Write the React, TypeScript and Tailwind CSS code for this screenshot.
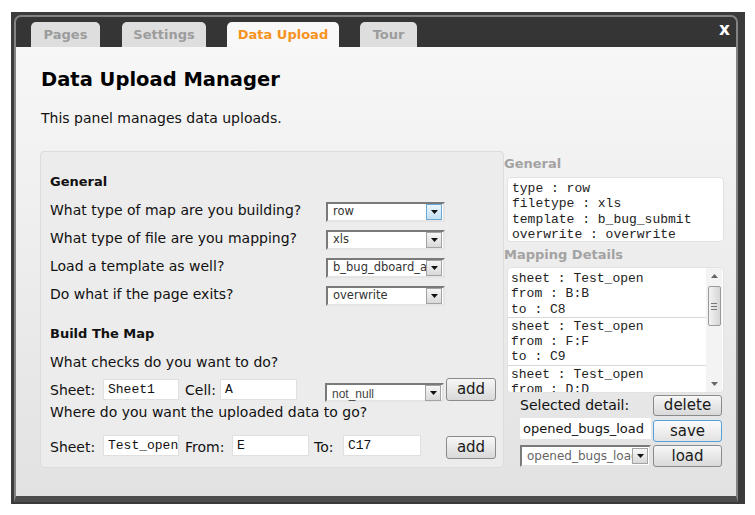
import React from 'react';

const sans = "font-['DejaVu_Sans',sans-serif]";
const mono = "font-['Liberation_Mono','Courier_New',monospace]";

const Arrow = ({ active }: { active?: boolean }) => (
  <span
    className={`flex h-[16px] w-[16px] shrink-0 items-center justify-center border ${
      active ? 'border-[#6aa7d4] bg-gradient-to-b from-[#eaf5fc] to-[#c2e0f4]' : 'border-[#a3a3a3] bg-gradient-to-b from-[#f6f6f6] to-[#d9d9d9]'
    }`}
  >
    <svg width="7" height="4" viewBox="0 0 7 4">
      <path d="M0 0h7L3.5 4z" fill="#111" />
    </svg>
  </span>
);

const Select = ({ value, className, active, textClass }: { value: string; className: string; active?: boolean; textClass?: string }) => (
  <div
    className={`flex items-center border-2 border-t-[#7a7a7a] border-l-[#7a7a7a] border-r-[#e4e4e4] border-b-[#e4e4e4] bg-white pr-px ${className}`}
  >
    <span className={`flex-1 overflow-hidden whitespace-nowrap pl-[5px] ${textClass ?? "text-[11.5px] text-[#333] " + sans}`}>{value}</span>
    <Arrow active={active} />
  </div>
);

const Field = ({ value, className }: { value: string; className: string }) => (
  <div className={`h-[21px] overflow-hidden whitespace-nowrap border border-[#e0e0e0] bg-white pl-[4px] text-[13px] leading-[19px] text-[#111] ${mono} ${className}`}>
    {value}
  </div>
);

const Btn = ({ label, className }: { label: string; className: string }) => (
  <div
    className={`flex items-center justify-center rounded-[3px] border bg-gradient-to-b text-[15px] text-[#1a1a1a] ${className}`}
  >
    {label}
  </div>
);

const tabs = [
  { name: 'Pages', w: 'w-[69px]', ml: 'ml-0' },
  { name: 'Settings', w: 'w-[84px]', ml: 'ml-[22px]' },
  { name: 'Data Upload', w: 'w-[112px]', ml: 'ml-[21px]', active: true },
  { name: 'Tour', w: 'w-[57px]', ml: 'ml-[21px]' },
];

const questions = [
  { q: 'What type of map are you building?', v: 'row', active: true },
  { q: 'What type of file are you mapping?', v: 'xls' },
  { q: 'Load a template as well?', v: 'b_bug_dboard_all' },
  { q: 'Do what if the page exits?', v: 'overwrite' },
];

const mappings = [
  ['sheet : Test_open', 'from : B:B', 'to : C8'],
  ['sheet : Test_open', 'from : F:F', 'to : C9'],
  ['sheet : Test_open', 'from : D:D', 'to : C10'],
];

export default function App() {
  return (
    <div className={`h-[515px] w-[755px] overflow-hidden bg-white ${sans}`}>
      <div className="ml-[11px] mt-[12px] h-[492px] w-[734px] bg-[#3b3b3b] pl-[3px] pt-[3px]">
        <div className="flex h-[487px] w-[724px] flex-col rounded-t-[7px] border-x-2 border-t-2 border-b-[6px] border-[#838383] border-b-[#4d4d4d] bg-[#353535]">
          {/* Tabs */}
          <div className="flex h-[30px] shrink-0 items-end pl-[15px] pr-[6px]">
            {tabs.map((t) => (
              <div
                key={t.name}
                className={`flex h-[25px] items-center justify-center rounded-t-[5px] text-[13px] font-bold ${t.w} ${t.ml} ${
                  t.active ? 'bg-[#f8f8f8] text-[#f7931e]' : 'bg-[#dedede] text-[#9c9c9c]'
                }`}
              >
                {t.name}
              </div>
            ))}
            <div className="ml-auto mb-[5px] self-start pt-[5px] text-[17px] font-bold leading-[14px] text-white">x</div>
          </div>

          {/* Body */}
          <div className="h-[449px] bg-gradient-to-b from-[#f7f7f7] to-[#e2e2e2] pl-[25px] pt-[21px] text-[#111]">
            <h1 className="h-[24px] text-[19.5px] font-bold leading-[24px] text-black">Data Upload Manager</h1>
            <p className="mt-[16px] h-[20px] text-[14px] leading-[20px]">This panel manages data uploads.</p>

            <div className="mt-[23px] flex items-start">
              {/* Left panel */}
              <div className="ml-[-1px] h-[317px] w-[464px] rounded-[4px] border border-[#dcdcdc] bg-[#ececec] pl-[9px] pt-[21px] text-[14px]">
                <div className="h-[18px] text-[13px] font-bold leading-[18px]">General</div>
                <div className="mt-[5px]">
                  {questions.map((r) => (
                    <div key={r.q} className="flex h-[28px] items-start">
                      <span className="w-[276px] leading-[28px]">{r.q}</span>
                      <Select value={r.v} active={r.active} className="mt-[6px] h-[20px] w-[119px]" />
                    </div>
                  ))}
                </div>

                <div className="mt-[17px] h-[18px] text-[13px] font-bold leading-[18px]">Build The Map</div>
                <div className="mt-[9px] h-[20px] leading-[20px]">What checks do you want to do?</div>
                <div className="flex h-[30px] items-start">
                  <span className="mt-[8px] w-[53px] leading-[20px]">Sheet:</span>
                  <Field value="Sheet1" className="mt-[7px] w-[76px]" />
                  <span className="ml-[6px] mt-[8px] w-[35px] leading-[20px]">Cell:</span>
                  <Field value="A" className="mt-[7px] w-[77px]" />
                  <Select
                    value="not_null"
                    className="ml-[28px] mt-[11px] h-[19px] w-[119px]"
                    textClass={"text-[12px] leading-[14px] pt-[3px] text-[#444] font-['Liberation_Sans',sans-serif]"}
                  />
                  <Btn label="add" className="ml-[2px] mt-[6px] h-[23px] w-[50px] border-[#8a8a8a] from-[#f7f7f7] to-[#d9d9d9]" />
                </div>
                <div className="h-[20px] leading-[20px]">Where do you want the uploaded data to go?</div>
                <div className="flex items-start">
                  <span className="mt-[15px] w-[53px] leading-[20px]">Sheet:</span>
                  <Field value="Test_open" className="mt-[13px] w-[76px]" />
                  <span className="ml-[6px] mt-[15px] w-[47px] leading-[20px]">From:</span>
                  <Field value="E" className="mt-[13px] w-[77px]" />
                  <span className="ml-[5px] mt-[15px] w-[29px] leading-[20px]">To:</span>
                  <Field value="C17" className="mt-[13px] w-[78px]" />
                  <Btn label="add" className="ml-[25px] mt-[14px] h-[23px] w-[50px] border-[#8a8a8a] from-[#f7f7f7] to-[#d9d9d9]" />
                </div>
              </div>

              {/* Right column */}
              <div className="w-[221px] pt-[4px]">
                <div className="h-[18px] text-[13px] font-bold leading-[18px] text-[#a3a3a3]">General</div>
                <div className={`ml-[3px] mt-[4px] h-[65px] w-[217px] rounded-[4px] border border-[#e2e2e2] bg-white pl-[4px] pt-[3px] text-[13px] leading-[15.3px] text-[#222] ${mono}`}>
                  <div>type : row</div>
                  <div>filetype : xls</div>
                  <div>template : b_bug_submit</div>
                  <div>overwrite : overwrite</div>
                </div>
                <div className="mt-[4px] h-[18px] text-[13px] font-bold leading-[18px] text-[#a3a3a3]">Mapping Details</div>
                <div className="ml-[3px] mt-[3px] flex h-[126px] w-[217px] overflow-hidden rounded-[4px] border border-[#e2e2e2] bg-white">
                  <div className={`flex-1 overflow-hidden pt-[2px] text-[13px] leading-[15.3px] text-[#222] ${mono}`}>
                    {mappings.map((m, i) => (
                      <div key={i} className="border-b border-[#d9d9d9] pl-[3px] pt-px">
                        {m.map((l) => (
                          <div key={l}>{l}</div>
                        ))}
                      </div>
                    ))}
                  </div>
                  <div className="mr-px flex w-[16px] flex-col items-center bg-[#f3f3f3]">
                    <svg className="mt-[6px]" width="7" height="4" viewBox="0 0 7 4">
                      <path d="M3.5 0L7 4H0z" fill="#666" />
                    </svg>
                    <div className="mt-[8px] flex h-[40px] w-[13px] items-center justify-center rounded-[2px] border border-[#9a9a9a] bg-gradient-to-r from-[#f2f2f2] to-[#d6d6d6]">
                      <div className="flex flex-col gap-[2px]">
                        <span className="h-px w-[6px] bg-[#777]" />
                        <span className="h-px w-[6px] bg-[#777]" />
                        <span className="h-px w-[6px] bg-[#777]" />
                      </div>
                    </div>
                    <svg className="mt-auto mb-[6px]" width="7" height="4" viewBox="0 0 7 4">
                      <path d="M0 0h7L3.5 4z" fill="#666" />
                    </svg>
                  </div>
                </div>

                <div className="ml-[16px] mt-[2px] text-[14px]">
                  <div className="flex h-[21px] items-start gap-[2px]">
                    <span className="w-[131px] leading-[21px]">Selected detail:</span>
                    <Btn label="delete" className="h-[21px] w-[69px] border-[#8a8a8a] from-[#f7f7f7] to-[#d9d9d9]" />
                  </div>
                  <div className="mt-[2px] flex h-[24px] items-start gap-[2px]">
                    <div className="h-[21px] w-[131px] overflow-hidden whitespace-nowrap bg-white pl-[3px] text-[13px] leading-[21px]">opened_bugs_load</div>
                    <Btn label="save" className="mt-[2px] h-[22px] w-[69px] border-[#55a0d9] from-[#fbfbfb] to-[#e3e3e3]" />
                  </div>
                  <div className="mt-[3px] flex h-[22px] items-start gap-[2px]">
                    <Select value="opened_bugs_load" className="h-[22px] w-[131px]" textClass={"text-[12px] text-[#666] " + sans} />
                    <Btn label="load" className="h-[22px] w-[69px] border-[#8a8a8a] from-[#f7f7f7] to-[#d9d9d9]" />
                  </div>
                </div>
              </div>
            </div>
          </div>
        </div>
      </div>
    </div>
  );
}
